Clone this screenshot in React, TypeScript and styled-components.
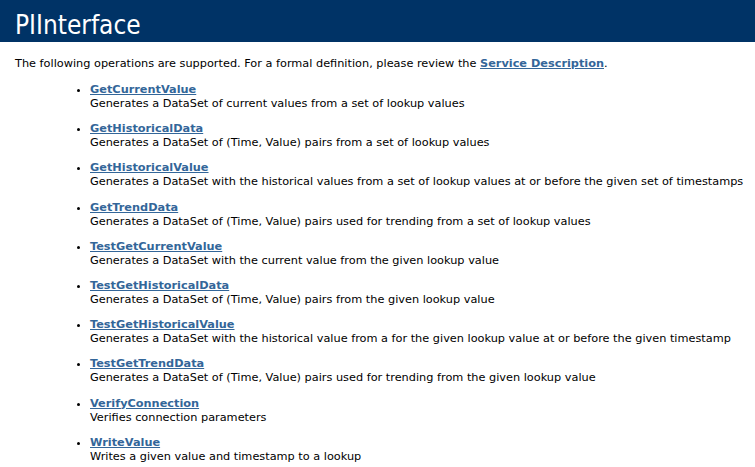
import React from "react";
import styled, { createGlobalStyle } from "styled-components";

const Global = createGlobalStyle`
  html, body { margin: 0; padding: 0; background: #ffffff; }
  body { color: #000000; font-family: "DejaVu Sans", sans-serif; }
`;

const Heading = styled.h1`
  margin: 0;
  background: #003366;
  color: #ffffff;
  font-family: "DejaVu Sans Condensed", "DejaVu Sans", sans-serif;
  font-weight: normal;
  font-size: 26px;
  height: 42px;
  box-sizing: border-box;
  padding: 10px 0 0 15px;
  line-height: 30px;
`;

const Content = styled.div`
  padding: 0 0 0 15px;
  font-size: 11.3px;
  line-height: 14px;
`;

const Intro = styled.p`
  margin: 15px 0 0 0;
`;

const Link = styled.a`
  color: #336699;
  font-weight: bold;
  text-decoration: underline;
`;

const OpList = styled.ul`
  margin: 12px 0 0 0;
  padding-left: 75px;
  list-style: disc;
`;

const OpItem = styled.li`
  margin-top: 11.2px;
  line-height: 14px;
`;

const ops: [string, string][] = [
  ["GetCurrentValue", "Generates a DataSet of current values from a set of lookup values"],
  ["GetHistoricalData", "Generates a DataSet of (Time, Value) pairs from a set of lookup values"],
  ["GetHistoricalValue", "Generates a DataSet with the historical values from a set of lookup values at or before the given set of timestamps"],
  ["GetTrendData", "Generates a DataSet of (Time, Value) pairs used for trending from a set of lookup values"],
  ["TestGetCurrentValue", "Generates a DataSet with the current value from the given lookup value"],
  ["TestGetHistoricalData", "Generates a DataSet of (Time, Value) pairs from the given lookup value"],
  ["TestGetHistoricalValue", "Generates a DataSet with the historical value from a for the given lookup value at or before the given timestamp"],
  ["TestGetTrendData", "Generates a DataSet of (Time, Value) pairs used for trending from the given lookup value"],
  ["VerifyConnection", "Verifies connection parameters"],
  ["WriteValue", "Writes a given value and timestamp to a lookup"],
];

export default function App() {
  return (
    <>
      <Global />
      <Heading>PIInterface</Heading>
      <Content>
        <Intro>
          The following operations are supported. For a formal definition, please review the{" "}
          <Link href="#">Service Description</Link>.
        </Intro>
        <OpList>
          {ops.map(([name, desc]) => (
            <OpItem key={name}>
              <Link href="#">{name}</Link>
              <br />
              {desc}
            </OpItem>
          ))}
        </OpList>
      </Content>
    </>
  );
}
